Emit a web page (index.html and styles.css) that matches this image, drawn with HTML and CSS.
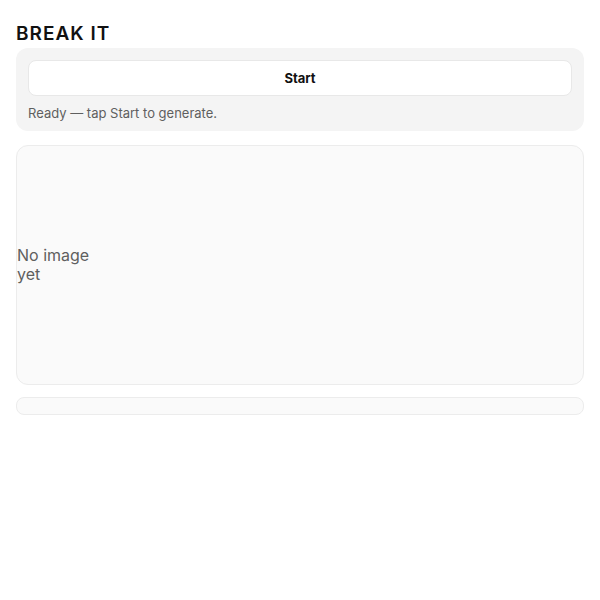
FILE: index.html
```html
<!DOCTYPE html>
<html>
<head>
<meta charset="utf-8">
<link rel="stylesheet" href="styles.css">
</head>
<body>
<main class="app">
  <h1 class="title">BREAK IT</h1>
  <section class="panel">
    <button class="start">Start</button>
    <p class="status">Ready — tap Start to generate.</p>
  </section>
  <section class="canvas">
    <span class="empty">No image yet</span>
  </section>
  <section class="log"></section>
</main>
</body>
</html>
```
FILE: styles.css
```css
html, body { margin: 0; background: #fff; }
body { font-family: Inter, "Noto Sans", sans-serif; color: #111; }
.app { padding: 23px 16px 16px; display: flex; flex-direction: column; }
.title { margin: 0 0 3px; font-size: 19px; font-weight: 600; letter-spacing: 1px; line-height: 22px; color: #111; }
.panel { background: #f4f4f4; border-radius: 12px; padding: 12px 12px 11px; display: flex; flex-direction: column; gap: 10px; }
.start { height: 36px; background: #fff; border: 1px solid #e8e8e8; border-radius: 8px; font-family: inherit; font-size: 13px; font-weight: 700; color: #111; }
.status { margin: 0; font-size: 13px; line-height: 14px; color: #5f5f5f; }
.canvas { margin-top: 14px; height: 238px; background: #fafafa; border: 1px solid #ececec; border-radius: 12px; display: flex; align-items: center; }
.empty { width: 80px; font-size: 16px; line-height: 19px; color: #5f5f5f; }
.log { margin-top: 12px; height: 16px; background: #fafafa; border: 1px solid #ececec; border-radius: 8px; }
```
